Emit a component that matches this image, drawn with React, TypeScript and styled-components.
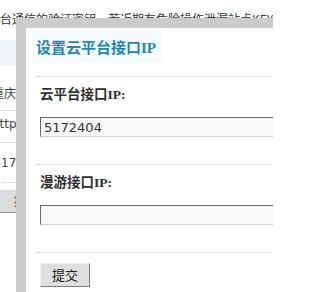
import React from "react";
import styled, { createGlobalStyle } from "styled-components";

const Global = createGlobalStyle`
  html, body {
    margin: 0;
    padding: 0;
    width: 273px;
    height: 292px;
    overflow: hidden;
    background: #ffffff;
  }
  body {
    font-family: "Noto Sans CJK SC", sans-serif;
  }
`;

const Page = styled.div`
  position: relative;
  width: 273px;
  height: 292px;
  overflow: hidden;
  background: #fff;
`;

const PageText = styled.div`
  margin-top: 9px;
  height: 20px;
  line-height: 20px;
  font-size: 12px;
  color: #333;
  white-space: nowrap;
  font-family: "Noto Sans CJK SC", sans-serif;
`;

const Band = styled.div`
  margin-top: 11px;
  height: 26px;
  background: #eef4fa;
`;

const Row = styled.div<{ $top: number; $bottom: number; $shift: number }>`
  padding-top: ${(p) => p.$top}px;
  padding-bottom: ${(p) => p.$bottom}px;
  margin-left: ${(p) => p.$shift}px;
  line-height: 16px;
  height: 16px;
  font-size: 12px;
  color: #444;
  white-space: nowrap;
  font-family: "DejaVu Sans", "Noto Sans CJK SC", sans-serif;
  border-bottom: 1px dotted #d0d0d0;
`;

const PageButton = styled.div`
  margin-top: 7px;
  margin-left: -20px;
  width: 80px;
  height: 22px;
  padding-left: 34px;
  line-height: 22px;
  font-size: 12px;
  color: #222;
  background: #dcdcdc;
  border-bottom: 1px solid #999;
  box-sizing: content-box;
`;

const Dialog = styled.div`
  position: absolute;
  left: 16px;
  top: 18px;
  width: 400px;
  height: 400px;
  background: #fff;
  border-left: 10px solid #cbcbcb;
  border-top: 10px solid #cbcbcb;
  display: flex;
  flex-direction: column;
`;

const Title = styled.h2`
  align-self: flex-start;
  margin: 2px 0 0 6px;
  padding: 8px 6px 4px 4px;
  line-height: 20px;
  font-size: 15px;
  font-weight: bold;
  color: #2388aa;
  background: #f6fbfd;
  font-family: "Liberation Serif", "Noto Sans CJK SC", serif;
`;

const Separator = styled.div<{ $top: number }>`
  margin-top: ${(p) => p.$top}px;
  margin-left: 10px;
  border-top: 1px dotted #c8c8c8;
`;

const Field = styled.div`
  padding: 8px 0 27px 14px;
  display: flex;
  flex-direction: column;
  gap: 12px;
`;

const Label = styled.label`
  line-height: 20px;
  height: 20px;
  font-size: 13.5px;
  font-weight: bold;
  color: #303030;
  font-family: "Liberation Serif", "Noto Sans CJK SC", serif;
`;

const Input = styled.input`
  box-sizing: border-box;
  width: 300px;
  height: 20px;
  margin: 0;
  padding: 0 3px;
  font-size: 13px;
  line-height: 18px;
  color: #333;
  background: #f8f8f8;
  border: 1px solid;
  border-color: #6a6a6a #cfcfcf #cfcfcf #6a6a6a;
  font-family: "DejaVu Sans", sans-serif;
  outline: none;
`;

const Actions = styled.div`
  padding: 8px 0 0 14px;
`;

const SubmitButton = styled.button`
  box-sizing: border-box;
  width: 50px;
  height: 24px;
  margin: 0;
  padding: 0;
  font-size: 13px;
  color: #222;
  background: #dfdfdf;
  border: 1px solid;
  border-color: #efefef #7c7c7c #7c7c7c #efefef;
  font-family: "Noto Sans CJK SC", sans-serif;
`;

export default function App() {
  return (
    <>
      <Global />
      <Page>
        <PageText>台通信的验证密钥，若近期有危险操作泄漏站点KEY</PageText>
        <Band />
        <Row $top={20} $bottom={8} $shift={-8}>重庆：</Row>
        <Row $top={5} $bottom={10} $shift={-8}>http</Row>
        <Row $top={12} $bottom={11} $shift={1}>17</Row>
        <PageButton>提交</PageButton>
        <Dialog>
          <Title>设置云平台接口IP</Title>
          <Separator $top={14} />
          <Field>
            <Label>云平台接口IP:</Label>
            <Input defaultValue="5172404" />
          </Field>
          <Separator $top={0} />
          <Field>
            <Label>漫游接口IP:</Label>
            <Input defaultValue="" />
          </Field>
          <Separator $top={0} />
          <Actions>
            <SubmitButton>提交</SubmitButton>
          </Actions>
        </Dialog>
      </Page>
    </>
  );
}
